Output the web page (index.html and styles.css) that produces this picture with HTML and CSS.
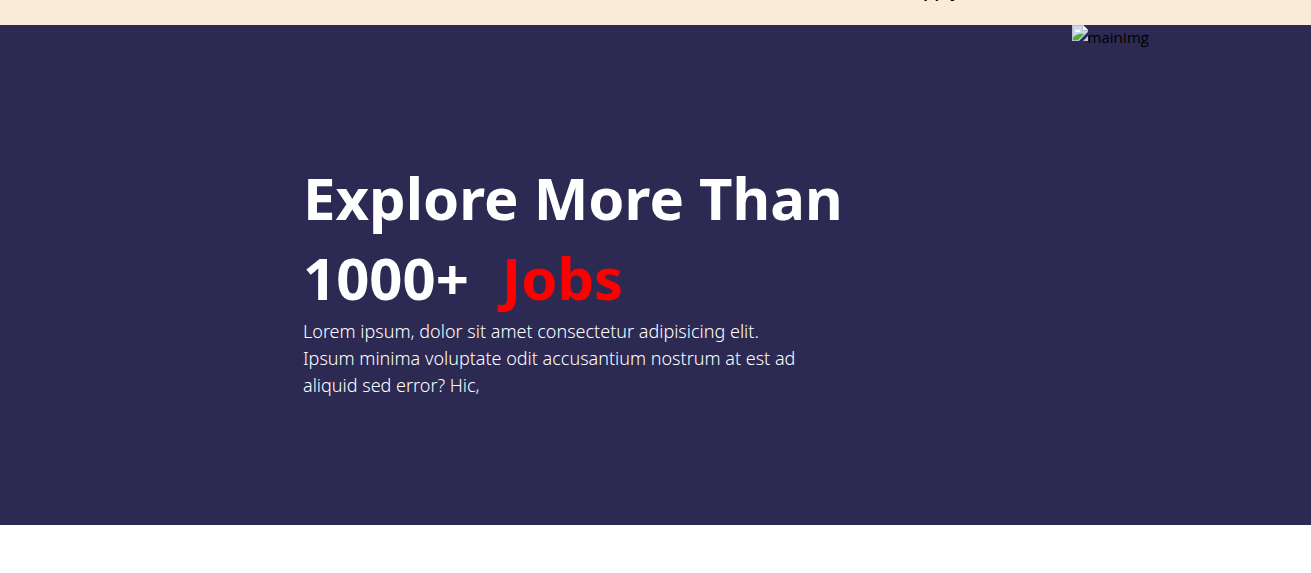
FILE: index.html
```html
<!DOCTYPE html>
<html lang="en">
<head>
<meta charset="utf-8">
<title>Explore Jobs</title>
<link rel="stylesheet" href="styles.css">
</head>
<body>
<header class="banner"><a class="banner-link" href="#jobs">Apply</a></header>
<main class="hero" id="jobs">
  <section class="hero-copy">
    <h1 class="hero-title">Explore More Than<br>1000+ <span class="accent">Jobs</span></h1>
    <p class="hero-text">Lorem ipsum, dolor sit amet consectetur adipisicing elit.<br>Ipsum minima voluptate odit accusantium nostrum at est ad<br>aliquid sed error? Hic,</p>
  </section>
  <div class="hero-media">
    <svg class="media-icon" viewBox="0 0 16 16" aria-hidden="true">
      <path d="M0 0H11L16 5V7L7 16H0Z" fill="#b9bec7"/>
      <path d="M1 1H10V6H15V7L7 15H1Z" fill="#c5d5f5"/>
      <path d="M11 0V5H16Z" fill="#f4f5f7"/>
      <path d="M3 7C3 5 5 4 6 5C8 4 9 6 8 7Z" fill="#fff"/>
      <path d="M1 15V13C3 10 7 8 12 9L6 15Z" fill="#4fae3c"/>
      <path d="M16 11V16H11Z" fill="#c4c8d2"/>
    </svg><span>mainImg</span>
  </div>
</main>
</body>
</html>
```
FILE: styles.css
```css
body {
  margin: 0;
  background: #fff;
  font-family: "Noto Sans", "Open Sans", sans-serif;
}

.banner {
  display: flex;
  justify-content: flex-end;
  margin-top: -20px;
  padding: 0 351px 24px 0;
  background: #faebd7;
}

.banner-link {
  color: #000;
  font-family: "Open Sans", "Noto Sans", sans-serif;
  font-size: 18px;
  font-weight: 600;
  line-height: 21px;
  text-decoration: none;
}

.hero {
  display: flex;
  justify-content: space-between;
  box-sizing: border-box;
  min-height: 500px;
  padding: 0 162px 0 303px;
  background: #2c2a52;
}

.hero-copy {
  padding-top: 133px;
}

.hero-title {
  margin: 0;
  color: #fff;
  font-size: 58px;
  font-weight: 700;
  line-height: 80px;
  white-space: nowrap;
}

.accent {
  margin-left: 18px;
  color: #f00;
}

.hero-text {
  margin: 0;
  color: #fff;
  font-size: 18px;
  font-weight: 300;
  line-height: 27px;
  white-space: nowrap;
}

.hero-media {
  display: flex;
  align-items: flex-start;
  color: #000;
  font-family: "Open Sans", "Noto Sans", sans-serif;
  font-size: 15px;
  line-height: 24px;
}

.media-icon {
  width: 16px;
  height: 16px;
}
```
